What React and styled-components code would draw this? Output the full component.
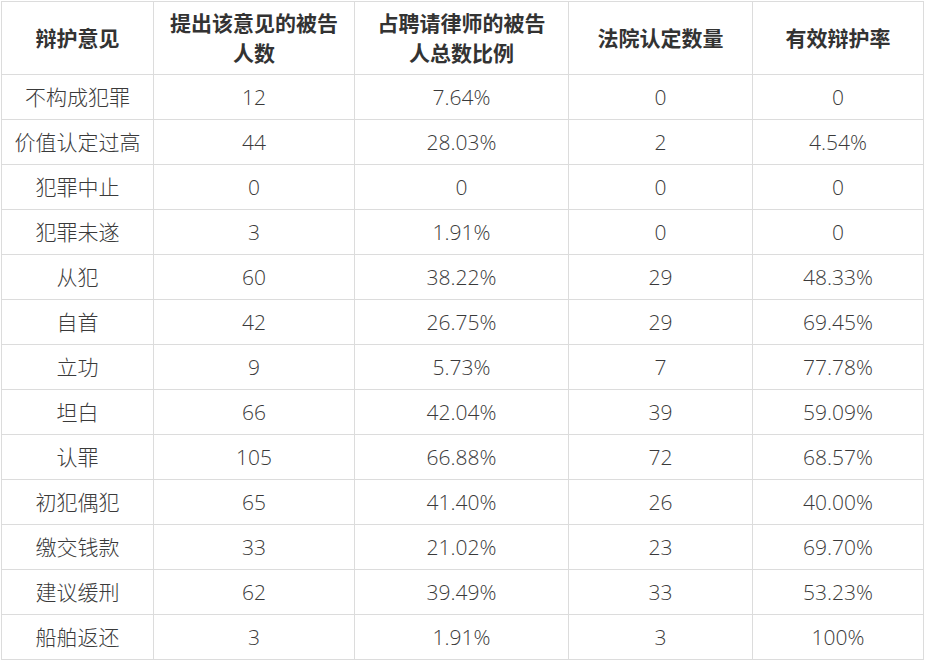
import React from 'react';
import styled, { createGlobalStyle } from 'styled-components';

const GlobalStyle = createGlobalStyle`
  html, body {
    margin: 0;
    padding: 0;
    background: #ffffff;
  }
  body {
    font-family: "Open Sans", "Noto Sans CJK SC", sans-serif;
  }
`;

const Page = styled.div`
  padding: 1px 0 0 1px;
`;

const Table = styled.table`
  width: 923px;
  border-collapse: collapse;
  table-layout: fixed;
  color: #3a3a3a;
  font-size: 21px;
`;

const HeadCell = styled.th`
  border: 1px solid #dcdcdc;
  padding: 6px 14px;
  line-height: 30px;
  font-weight: 700;
  color: #333333;
  text-align: center;
`;

const Cell = styled.td`
  border: 1px solid #dcdcdc;
  padding: 7px 8px;
  line-height: 30px;
  font-weight: 300;
  text-align: center;
  white-space: nowrap;
`;

const columns = [
  { title: '辩护意见', width: 152 },
  { title: '提出该意见的被告人数', width: 201 },
  { title: '占聘请律师的被告人总数比例', width: 214 },
  { title: '法院认定数量', width: 184 },
  { title: '有效辩护率', width: 171 },
];

const rows = [
  ['不构成犯罪', '12', '7.64%', '0', '0'],
  ['价值认定过高', '44', '28.03%', '2', '4.54%'],
  ['犯罪中止', '0', '0', '0', '0'],
  ['犯罪未遂', '3', '1.91%', '0', '0'],
  ['从犯', '60', '38.22%', '29', '48.33%'],
  ['自首', '42', '26.75%', '29', '69.45%'],
  ['立功', '9', '5.73%', '7', '77.78%'],
  ['坦白', '66', '42.04%', '39', '59.09%'],
  ['认罪', '105', '66.88%', '72', '68.57%'],
  ['初犯偶犯', '65', '41.40%', '26', '40.00%'],
  ['缴交钱款', '33', '21.02%', '23', '69.70%'],
  ['建议缓刑', '62', '39.49%', '33', '53.23%'],
  ['船舶返还', '3', '1.91%', '3', '100%'],
];

export default function App() {
  return (
    <>
      <GlobalStyle />
      <Page>
        <Table>
          <colgroup>
            {columns.map((c) => (
              <col key={c.title} style={{ width: c.width }} />
            ))}
          </colgroup>
          <thead>
            <tr>
              {columns.map((c) => (
                <HeadCell key={c.title}>{c.title}</HeadCell>
              ))}
            </tr>
          </thead>
          <tbody>
            {rows.map((r) => (
              <tr key={r[0]}>
                {r.map((v, i) => (
                  <Cell key={i}>{v}</Cell>
                ))}
              </tr>
            ))}
          </tbody>
        </Table>
      </Page>
    </>
  );
}
